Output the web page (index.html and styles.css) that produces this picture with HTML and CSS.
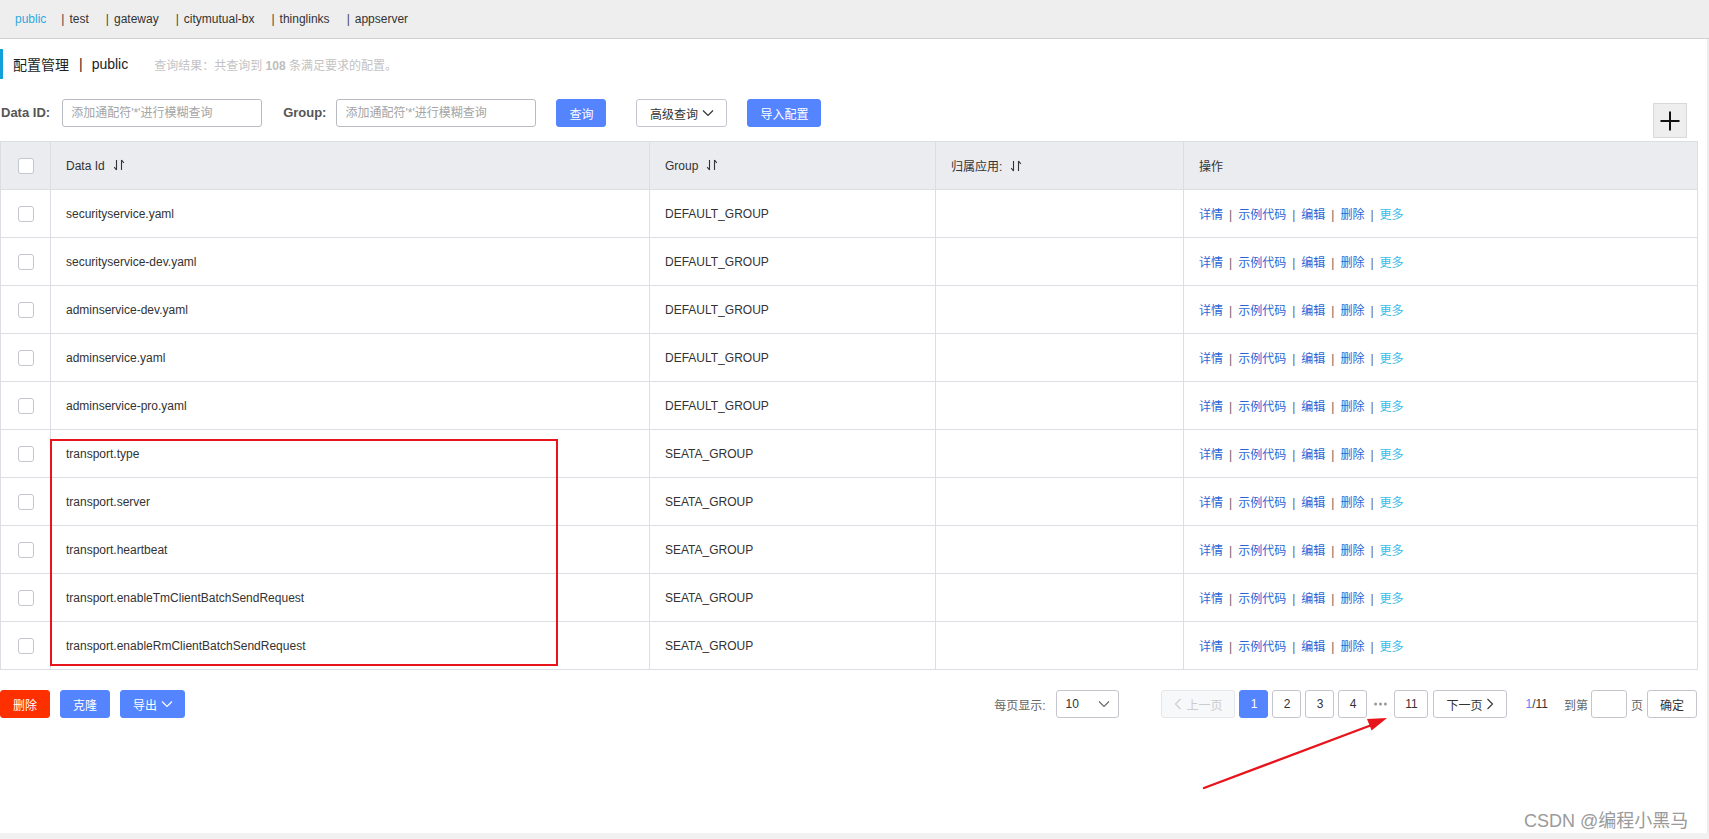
FILE: index.html
```html
<!DOCTYPE html>
<html lang="zh-CN">
<head>
<meta charset="utf-8">
<title>配置管理</title>
<link rel="stylesheet" href="styles.css">
</head>
<body>
<nav class="tabs">
  <span class="tab active">public</span>
  <span class="tab"><i class="sep">|</i>test</span>
  <span class="tab"><i class="sep">|</i>gateway</span>
  <span class="tab"><i class="sep">|</i>citymutual-bx</span>
  <span class="tab"><i class="sep">|</i>thinglinks</span>
  <span class="tab"><i class="sep">|</i>appserver</span>
</nav>
<div class="frame">
  <div class="page">
    <div class="title">
      <span class="title-name">配置管理</span><span class="title-sep">|</span><span class="title-ns">public</span>
      <span class="result">查询结果：共查询到 <b>108</b> 条满足要求的配置。</span>
    </div>
    <div class="toolbar">
      <label class="lbl">Data ID:</label>
      <input class="inp" placeholder="添加通配符'*'进行模糊查询">
      <label class="lbl lbl-group">Group:</label>
      <input class="inp" placeholder="添加通配符'*'进行模糊查询">
      <button class="btn primary btn-query">查询</button>
      <button class="btn normal btn-adv">高级查询<svg class="chev" viewBox="0 0 12 8" width="12" height="8"><path d="M1 1.5l5 5 5-5" fill="none" stroke="#333" stroke-width="1.2"/></svg></button>
      <button class="btn primary btn-import">导入配置</button>
      <button class="plus"><svg viewBox="0 0 20 20" width="20" height="20"><path d="M10 0.5v19M0.5 10h19" stroke="#111" stroke-width="2" fill="none"/></svg></button>
    </div>
    <table class="grid">
      <colgroup><col class="c0"><col class="c1"><col class="c2"><col class="c3"><col class="c4"></colgroup>
      <thead>
        <tr>
          <th class="cb-cell"><span class="cb"></span></th>
          <th>Data Id<svg class="sort" viewBox="0 0 12 12" width="12" height="12"><path d="M3.5 1v10M3.5 11L1.2 8.2M8.5 11V1M8.5 1l2.3 2.8" stroke="#333" stroke-width="1.1" fill="none"/></svg></th>
          <th>Group<svg class="sort" viewBox="0 0 12 12" width="12" height="12"><path d="M3.5 1v10M3.5 11L1.2 8.2M8.5 11V1M8.5 1l2.3 2.8" stroke="#333" stroke-width="1.1" fill="none"/></svg></th>
          <th>归属应用:<svg class="sort" viewBox="0 0 12 12" width="12" height="12"><path d="M3.5 1v10M3.5 11L1.2 8.2M8.5 11V1M8.5 1l2.3 2.8" stroke="#333" stroke-width="1.1" fill="none"/></svg></th>
          <th>操作</th>
        </tr>
      </thead>
      <tbody>
        <tr><td class="cb-cell"><span class="cb"></span></td><td>securityservice.yaml</td><td>DEFAULT_GROUP</td><td></td><td class="ops"><a>详情</a><i>|</i><a>示例代码</a><i>|</i><a>编辑</a><i>|</i><a>删除</a><i>|</i><a class="more">更多</a></td></tr>
        <tr><td class="cb-cell"><span class="cb"></span></td><td>securityservice-dev.yaml</td><td>DEFAULT_GROUP</td><td></td><td class="ops"><a>详情</a><i>|</i><a>示例代码</a><i>|</i><a>编辑</a><i>|</i><a>删除</a><i>|</i><a class="more">更多</a></td></tr>
        <tr><td class="cb-cell"><span class="cb"></span></td><td>adminservice-dev.yaml</td><td>DEFAULT_GROUP</td><td></td><td class="ops"><a>详情</a><i>|</i><a>示例代码</a><i>|</i><a>编辑</a><i>|</i><a>删除</a><i>|</i><a class="more">更多</a></td></tr>
        <tr><td class="cb-cell"><span class="cb"></span></td><td>adminservice.yaml</td><td>DEFAULT_GROUP</td><td></td><td class="ops"><a>详情</a><i>|</i><a>示例代码</a><i>|</i><a>编辑</a><i>|</i><a>删除</a><i>|</i><a class="more">更多</a></td></tr>
        <tr><td class="cb-cell"><span class="cb"></span></td><td>adminservice-pro.yaml</td><td>DEFAULT_GROUP</td><td></td><td class="ops"><a>详情</a><i>|</i><a>示例代码</a><i>|</i><a>编辑</a><i>|</i><a>删除</a><i>|</i><a class="more">更多</a></td></tr>
        <tr><td class="cb-cell"><span class="cb"></span></td><td>transport.type</td><td>SEATA_GROUP</td><td></td><td class="ops"><a>详情</a><i>|</i><a>示例代码</a><i>|</i><a>编辑</a><i>|</i><a>删除</a><i>|</i><a class="more">更多</a></td></tr>
        <tr><td class="cb-cell"><span class="cb"></span></td><td>transport.server</td><td>SEATA_GROUP</td><td></td><td class="ops"><a>详情</a><i>|</i><a>示例代码</a><i>|</i><a>编辑</a><i>|</i><a>删除</a><i>|</i><a class="more">更多</a></td></tr>
        <tr><td class="cb-cell"><span class="cb"></span></td><td>transport.heartbeat</td><td>SEATA_GROUP</td><td></td><td class="ops"><a>详情</a><i>|</i><a>示例代码</a><i>|</i><a>编辑</a><i>|</i><a>删除</a><i>|</i><a class="more">更多</a></td></tr>
        <tr><td class="cb-cell"><span class="cb"></span></td><td>transport.enableTmClientBatchSendRequest</td><td>SEATA_GROUP</td><td></td><td class="ops"><a>详情</a><i>|</i><a>示例代码</a><i>|</i><a>编辑</a><i>|</i><a>删除</a><i>|</i><a class="more">更多</a></td></tr>
        <tr><td class="cb-cell"><span class="cb"></span></td><td>transport.enableRmClientBatchSendRequest</td><td>SEATA_GROUP</td><td></td><td class="ops"><a>详情</a><i>|</i><a>示例代码</a><i>|</i><a>编辑</a><i>|</i><a>删除</a><i>|</i><a class="more">更多</a></td></tr>
      </tbody>
    </table>
    <div class="footer">
      <div class="batch">
        <button class="btn danger">删除</button>
        <button class="btn primary">克隆</button>
        <button class="btn primary btn-export">导出<svg class="chev" viewBox="0 0 12 8" width="12" height="8"><path d="M1 1.5l5 5 5-5" fill="none" stroke="#fff" stroke-width="1.2"/></svg></button>
      </div>
      <div class="pager">
        <span class="muted">每页显示:</span>
        <div class="select"><span>10</span><svg viewBox="0 0 12 8" width="12" height="8"><path d="M1 1.5l5 5 5-5" fill="none" stroke="#666" stroke-width="1.1"/></svg></div>
        <div class="pages">
          <button class="pg pg-wide disabled"><svg viewBox="0 0 8 12" width="8" height="12"><path d="M6.5 1L1.5 6l5 5" fill="none" stroke="#ccc" stroke-width="1.1"/></svg>上一页</button>
          <button class="pg current">1</button>
          <button class="pg">2</button>
          <button class="pg">3</button>
          <button class="pg">4</button>
          <span class="dots"><svg viewBox="0 0 13 4" width="13" height="4"><circle cx="1.6" cy="2" r="1.5" fill="#999"/><circle cx="6.5" cy="2" r="1.5" fill="#999"/><circle cx="11.4" cy="2" r="1.5" fill="#999"/></svg></span>
          <button class="pg pg-last">11</button>
          <button class="pg pg-wide pg-next">下一页<svg viewBox="0 0 8 12" width="8" height="12"><path d="M1.5 1l5 5-5 5" fill="none" stroke="#333" stroke-width="1.1"/></svg></button>
        </div>
        <span class="total"><em>1</em>/11</span>
        <span class="muted jump">到第</span>
        <input class="jump-inp">
        <span class="muted">页</span>
        <button class="pg pg-ok">确定</button>
      </div>
    </div>
  </div>
  <div class="rail"></div>
</div>
<div class="bottom-bar"></div>

<div class="mark-box"></div>
<svg class="mark-arrow" viewBox="1190 705 210 95" width="210" height="95">
  <path d="M1204 788 L1373 724.5" stroke="#e8141c" stroke-width="2.4" fill="none" stroke-linecap="round"/>
  <polygon points="1387,718 1367,718.9 1371.6,730.4" fill="#e8141c"/>
</svg>
<div class="watermark">CSDN @编程小黑马</div>
</body>
</html>
```

FILE: styles.css
```css
* { box-sizing: border-box; }
html, body { margin: 0; padding: 0; }
body {
  width: 1709px;
  height: 839px;
  overflow: hidden;
  background: #fff;
  position: relative;
  font-family: "Liberation Sans", Arial, "Noto Sans CJK SC", sans-serif;
  font-size: 12px;
  color: #333;
}
button, input { font-family: inherit; font-size: 12px; }

/* top namespace tabs */
.tabs {
  height: 39px;
  background: #eeeeee;
  border-bottom: 1px solid #cfcfcf;
  display: flex;
  align-items: center;
  gap: 17px;
  padding-left: 15px;
  padding-bottom: 1px;
}
.tab { color: #333; white-space: nowrap; }
.tab.active { color: #2fa9e0; margin-right: -2px; }
.tab .sep { font-style: normal; margin-right: 5px; color: #444; }

.frame { display: flex; height: 794px; }
.page { flex: 1; min-width: 0; padding-right: 10px; }
.rail { width: 2px; background: #ededed; }
.bottom-bar { height: 6px; background: #f1f1f1; }

/* title */
.title {
  margin-top: 10px;
  height: 30px;
  border-left: 3px solid #12a0da;
  padding-left: 10px;
  display: flex;
  align-items: center;
  font-size: 14px;
  color: #222;
}
.title-sep { margin: 0 9px 0 10px; }
.result { margin-left: 26px; font-size: 12px; color: #c3c3c3; }
.result b { font-weight: bold; color: #bdbdbd; }

/* toolbar */
.toolbar {
  margin-top: 20px;
  height: 42px;
  display: flex;
  align-items: flex-start;
}
.lbl {
  height: 28px;
  line-height: 28px;
  font-size: 13px;
  font-weight: bold;
  color: #555;
  padding-left: 1px;
  margin-right: 12px;
}
.lbl-group { margin-left: 20px; margin-right: 10px; }
.inp {
  width: 200px;
  height: 28px;
  border: 1px solid #b9bbc2;
  border-radius: 3px;
  padding: 0 8px;
  color: #333;
  outline: none;
}
.inp::placeholder { color: #a4a4a4; }
.btn {
  height: 28px;
  border-radius: 3px;
  padding: 0 12px;
  border: 1px solid transparent;
  display: inline-flex;
  align-items: center;
  gap: 4px;
  cursor: pointer;
  white-space: nowrap;
}
.btn.primary { background: #5584ff; border-color: #5584ff; color: #fff; }
.btn.danger { background: #ff3000; border-color: #ff3000; color: #fff; }
.btn.normal { background: #fff; border-color: #c4c6cf; color: #333; }
.btn-query { margin-left: 20px; }
.btn-adv { margin-left: 30px; width: 91px; justify-content: center; }
.btn-import { margin-left: 20px; }
.plus {
  margin-left: auto;
  margin-right: 10px;
  margin-top: 4px;
  width: 34px;
  height: 35px;
  background: #eeeeee;
  border: 1px solid #d8d8d8;
  padding: 0;
  display: flex;
  align-items: center;
  justify-content: center;
}

/* table */
.grid {
  width: 1697px;
  border-collapse: collapse;
  table-layout: fixed;
}
.c0 { width: 50px; }
.c1 { width: 599px; }
.c2 { width: 286px; }
.c3 { width: 248px; }
.c4 { width: 514px; }
.grid th, .grid td {
  border: 1px solid #dcdee3;
  height: 48px;
  padding: 0 15px;
  text-align: left;
  font-weight: normal;
  font-size: 12px;
  color: #333;
  white-space: nowrap;
}
.grid th { background: #ebecf0; }
.grid .cb-cell { padding: 0; text-align: center; }
.cb {
  display: inline-block;
  width: 16px;
  height: 16px;
  border: 1px solid #c4c6cf;
  border-radius: 3px;
  background: #fff;
  vertical-align: middle;
}
.sort { margin-left: 8px; vertical-align: -1px; }
.ops a { color: #2a66d6; }
.ops a.more { color: #39bde8; }
.ops i { font-style: normal; color: #666; margin: 0 6px; }

/* footer */
.footer {
  margin-top: 20px;
  height: 28px;
  display: flex;
  justify-content: space-between;
  align-items: center;
}
.batch { display: flex; gap: 10px; }
.btn-export { padding: 0 11px 0 12px; }
.pager { display: flex; align-items: center; height: 28px; }
.muted { color: #666; }
.select {
  margin-left: 11px;
  width: 63px;
  height: 28px;
  border: 1px solid #c4c6cf;
  border-radius: 3px;
  display: flex;
  align-items: center;
  justify-content: space-between;
  padding: 0 8px 0 8px;
  color: #333;
}
.pages { margin-left: 42px; display: flex; align-items: center; gap: 4px; }
.pg {
  height: 28px;
  min-width: 29px;
  border: 1px solid #c4c6cf;
  border-radius: 3px;
  background: #fff;
  color: #333;
  padding: 0 8px;
  display: inline-flex;
  align-items: center;
  justify-content: center;
  gap: 4px;
}
.pg.current { background: #5584ff; border-color: #5584ff; color: #fff; }
.pg.disabled { background: #f7f8fa; border-color: #e6e7eb; color: #ccc; }
.pg-wide { width: 74px; }
.pg-last { width: 34px; }
.pg-next { margin-left: 1px; }
.dots { width: 19px; display: flex; justify-content: center; align-items: center; }
.total { margin-left: 18px; color: #333; }
.total em { font-style: normal; color: #5584ff; }
.jump { margin-left: 16px; }
.jump-inp {
  width: 36px;
  height: 28px;
  margin: 0 4px 0 3px;
  border: 1px solid #c4c6cf;
  border-radius: 3px;
  outline: none;
}
.pg-ok { width: 50px; margin-left: 4px; }

/* annotations over the screenshot */
.mark-box {
  position: absolute;
  left: 50px;
  top: 439px;
  width: 508px;
  height: 227px;
  border: 2px solid #e8141c;
}
.mark-arrow {
  position: absolute;
  left: 1190px;
  top: 705px;
}
.watermark {
  position: absolute;
  left: 1524px;
  top: 806px;
  font-size: 18px;
  color: #9a9a9a;
  white-space: nowrap;
  text-shadow: 0 0 1px #fff;
}
```
